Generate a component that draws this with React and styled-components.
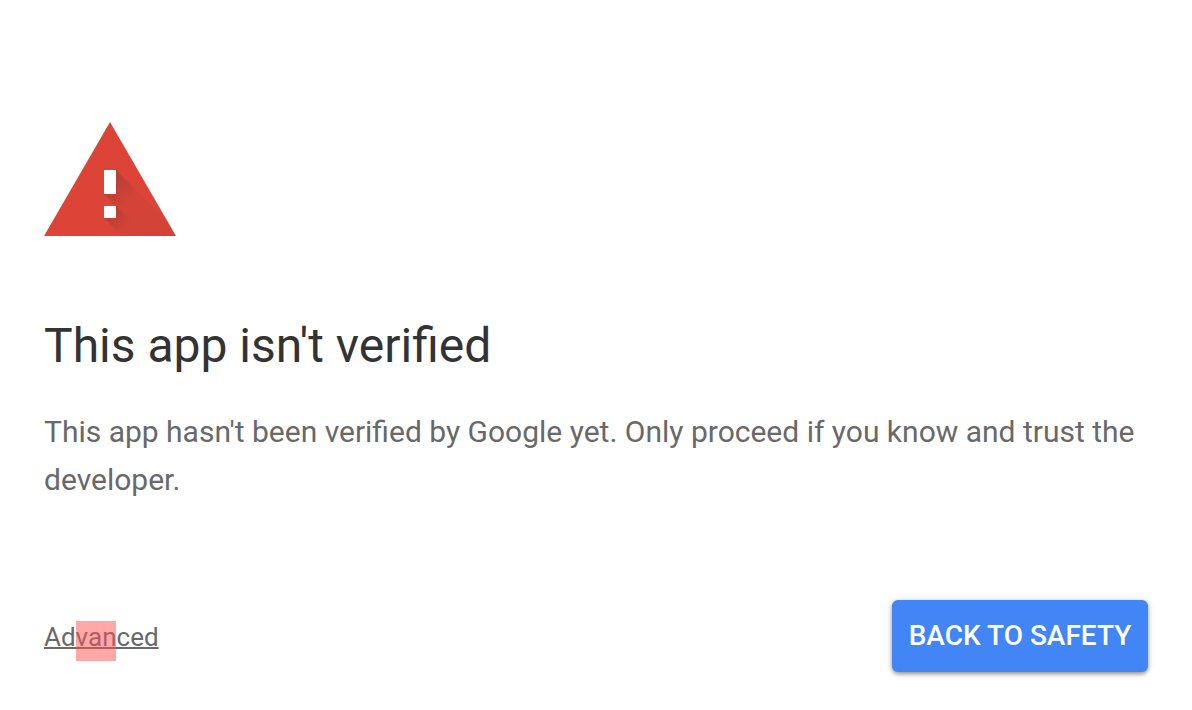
import styled, { createGlobalStyle } from "styled-components";

const GlobalStyle = createGlobalStyle`
    body {
        margin: 0;
        background: #fff;
        font-family: Roboto, "Liberation Sans", sans-serif;
    }
`
const Page = styled.main`
    padding: 122px 44px 38px;
`
const WarningIcon = styled.svg`
    display: block;
    width: 132px;
    height: 114px;
`
const Title = styled.h1`
    margin: 82px 0 0;
    color: #333;
    font-size: 48px;
    font-weight: 400;
    line-height: 56px;
`
const Message = styled.p`
    margin: 34px 0 0;
    color: #696969;
    font-size: 30px;
    line-height: 48px;
`
const Actions = styled.div`
    display: flex;
    align-items: center;
    justify-content: space-between;
    margin-top: 96px;
`
const AdvancedLink = styled.a`
    position: relative;
    padding-top: 2px;
    color: #696969;
    font-size: 26px;
    line-height: 32px;
    text-decoration: underline;
    text-decoration-thickness: 2px;
`
const ClickMark = styled.span`
    position: absolute;
    top: 2px;
    left: 32px;
    width: 40px;
    height: 40px;
    background: rgba(255, 82, 82, 0.5);
    pointer-events: none;
`
const SafetyButton = styled.button`
    min-width: 256px;
    height: 72px;
    padding: 0 16px 2px;
    border: 0;
    border-radius: 6px;
    background: #4285f4;
    box-shadow: 0 2px 4px rgba(0, 0, 0, 0.4), 0 0 12px rgba(0, 0, 0, 0.08);
    color: #fff;
    font-family: inherit;
    font-size: 28px;
    font-weight: 500;
    text-transform: uppercase;
    cursor: pointer;
`
const App = () => (
    <>
        <GlobalStyle />
        <Page>
            <WarningIcon viewBox="0 0 132 114" aria-hidden="true">
                <defs>
                    <linearGradient id="barShade" gradientUnits="userSpaceOnUse" x1="66" y1="60" x2="84" y2="78">
                        <stop offset="0" stopColor="#262626" stopOpacity="0.2" />
                        <stop offset="1" stopColor="#262626" stopOpacity="0.04" />
                    </linearGradient>
                    <linearGradient id="dotShade" gradientUnits="userSpaceOnUse" x1="66" y1="90" x2="81" y2="105">
                        <stop offset="0" stopColor="#262626" stopOpacity="0.2" />
                        <stop offset="1" stopColor="#262626" stopOpacity="0.04" />
                    </linearGradient>
                </defs>
                <path d="M66 0 132 114H0z" fill="#db4437" />
                <path d="M72 48 124 100 132 114H102L60 72V48z" fill="url(#barShade)" />
                <path d="M72 84 102 114H78L60 96V84z" fill="url(#dotShade)" />
                <path d="M60 48h12v24H60zM60 84h12v12H60z" fill="#fff" />
            </WarningIcon>
            <Title>This app isn't verified</Title>
            <Message>
                This app hasn't been verified by Google yet. Only proceed if you know and trust the developer.
            </Message>
            <Actions>
                <AdvancedLink href="#advanced">Advanced<ClickMark /></AdvancedLink>
                <SafetyButton type="button">Back to safety</SafetyButton>
            </Actions>
        </Page>
    </>
)

export default App;
